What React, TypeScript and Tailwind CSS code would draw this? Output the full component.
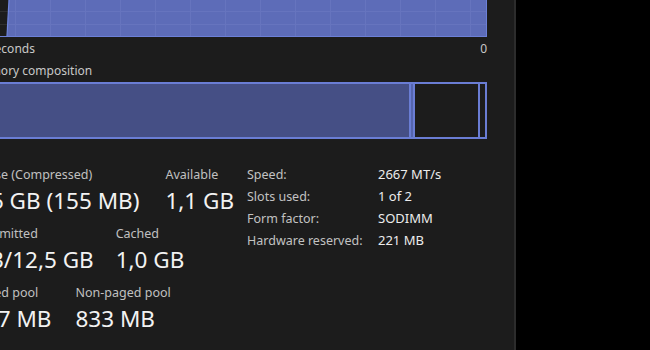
import React from "react";

const font = { fontFamily: '"Noto Sans", "Open Sans", sans-serif' };

function Graph() {
  const vlines: number[] = [];
  for (let x = 15; x < 487; x += 35) vlines.push(x);
  const hlines = [11, 24];
  return (
    <svg width={515} height={37} viewBox="-28 0 515 37" className="block">
      {hlines.map((y) => (
        <line key={"d" + y} x1={-28} x2={8} y1={y + 0.5} y2={y + 0.5} stroke="#2e2e2e" strokeWidth={1} />
      ))}
      <polygon points="9,0 486,0 486,36 7,36" fill="#5d6cb8" />
      {vlines.map((x) => (
        <line key={"v" + x} x1={x + 0.5} x2={x + 0.5} y1={0} y2={36} stroke="#6674be" strokeWidth={1} />
      ))}
      {hlines.map((y) => (
        <line key={"h" + y} x1={9} x2={486} y1={y + 0.5} y2={y + 0.5} stroke="#6674be" strokeWidth={1} />
      ))}
      <line x1={9} y1={0} x2={7} y2={36} stroke="#7086e0" strokeWidth={1.2} />
      <line x1={-28} x2={487} y1={36.5} y2={36.5} stroke="#6c80d8" strokeWidth={1} />
      <line x1={486.5} x2={486.5} y1={0} y2={37} stroke="#6c80d8" strokeWidth={1} />
    </svg>
  );
}

function Stat({ label, value }: { label: string; value: string }) {
  return (
    <div className="flex flex-col">
      <div className="text-[12.5px] leading-[18px] text-[#c0c0c0] whitespace-nowrap">{label}</div>
      <div className="mt-[2px] text-[22.5px] leading-[30px] text-[#f2f2f2] whitespace-nowrap">{value}</div>
    </div>
  );
}

function Info({ label, value }: { label: string; value: string }) {
  return (
    <div className="flex h-[22px] items-center text-[12.5px]">
      <div className="w-[131px] text-[#c2c2c2] whitespace-nowrap">{label}</div>
      <div className="text-[13px] text-[#ececec] whitespace-nowrap">{value}</div>
    </div>
  );
}

export default function App() {
  return (
    <div className="w-[650px] h-[350px] bg-black flex overflow-hidden" style={font}>
      <div className="w-[516px] h-full bg-[#1c1c1c] border-r-2 border-[#2c2c2c] overflow-hidden">
        <div className="-ml-[28px] w-[515px]">
          <Graph />
          <div className="flex justify-between h-[22px] pt-[2px] items-center text-[12px] text-[#c8c8c8]">
            <span>60 seconds</span>
            <span>0</span>
          </div>
          <div className="h-[22px] pt-[2px] flex items-center text-[12px] text-[#c8c8c8]">Memory composition</div>
          <div className="mt-[1px] h-[57px] flex border-y-2 border-r-2 border-[#6a7dd4]">
            <div className="flex-1 bg-[#454f85] border-r-2 border-[#6a7dd4]" />
            <div className="w-[4px] bg-[#5565ae] border-r-2 border-[#6a7dd4]" />
            <div className="w-[65px] border-r-2 border-[#6a7dd4]" />
            <div className="w-[5px]" />
          </div>
          <div className="mt-[25px] flex">
            <div className="w-[275px] pt-[2px] flex flex-col gap-[9px]">
              <div className="flex gap-[26px]">
                <Stat label="In use (Compressed)" value="7,5 GB (155 MB)" />
                <Stat label="Available" value="1,1 GB" />
              </div>
              <div className="flex gap-[22px]">
                <Stat label="Committed" value="9,3/12,5 GB" />
                <Stat label="Cached" value="1,0 GB" />
              </div>
              <div className="flex gap-6">
                <Stat label="Paged pool" value="567 MB" />
                <Stat label="Non-paged pool" value="833 MB" />
              </div>
            </div>
            <div className="flex flex-col">
              <Info label="Speed:" value="2667 MT/s" />
              <Info label="Slots used:" value="1 of 2" />
              <Info label="Form factor:" value="SODIMM" />
              <Info label="Hardware reserved:" value="221 MB" />
            </div>
          </div>
        </div>
      </div>
      <div className="flex-1 bg-black" />
    </div>
  );
}
